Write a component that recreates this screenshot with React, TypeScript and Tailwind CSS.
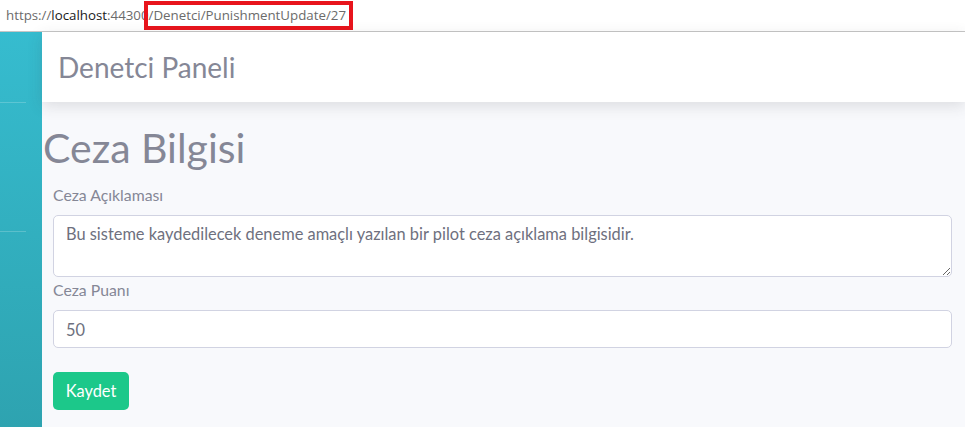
import React from "react"

const App: React.FC = () => {
  return (
    <div className="w-[965px] h-[427px] overflow-hidden bg-[#f8f9fc] flex flex-col font-['Lato',sans-serif]">
      {/* address bar */}
      <div className="h-[32px] bg-white border-b border-[#c6c6c6] flex items-center shrink-0 relative">
        <div className="pl-[6px] text-[13.3px] font-['Open_Sans',sans-serif] text-[#6b6b6b]">
          https://<span className="text-[#1a1a1a]">localhost</span>:44300/Denetci/PunishmentUpdate/27
        </div>
        {/* red highlight box drawn over the url */}
        <div className="absolute left-[144px] top-[1px] w-[209px] h-[29px] border-[4px] border-[#e8141c] pointer-events-none" />
      </div>

      <div className="flex flex-1 min-h-0">
        {/* sidebar */}
        <div className="w-[42px] shrink-0 bg-gradient-to-b from-[#36bccf] to-[#2ea3b0] flex flex-col">
          <div className="h-[70px]" />
          <div className="h-px w-[26px] bg-white/20" />
          <div className="h-[128px]" />
          <div className="h-px w-[26px] bg-white/20" />
        </div>

        {/* main */}
        <div className="flex-1 flex flex-col">
          <div className="h-[70px] bg-white shadow-[0_4px_14px_rgba(58,59,69,0.15)] flex items-center pl-[16px] relative z-10">
            <span className="text-[28px] text-[#858796]">Denetci Paneli</span>
          </div>

          <div className="pt-[22px] pl-px">
            <h1 className="text-[41px] leading-[48px] text-[#858796]">Ceza Bilgisi</h1>
            <div className="px-[10px] pr-[13px] mt-[11px]">
              <label className="block text-[15.8px] leading-[24px] text-[#858796] mb-[8px]">Ceza Açıklaması</label>
              <textarea
                className="block w-full h-[62px] rounded-[5px] border border-[#d1d3e2] bg-white px-[12px] py-[6px] text-[16.4px] leading-[24px] text-[#6e707e] outline-none"
                defaultValue="Bu sisteme kaydedilecek deneme amaçlı yazılan bir pilot ceza açıklama bilgisidir."
              />
              <label className="block text-[15.8px] leading-[24px] text-[#858796] mt-[1px] mb-[8px]">Ceza Puanı</label>
              <input
                type="text"
                className="block w-full h-[38px] rounded-[5px] border border-[#d1d3e2] bg-white px-[12px] text-[16.4px] text-[#6e707e] outline-none"
                defaultValue="50"
              />
              <button className="mt-[24px] h-[38px] w-[76px] rounded-[5px] bg-[#1cc88a] text-white text-[16.4px]">
                Kaydet
              </button>
            </div>
          </div>
        </div>
      </div>
    </div>
  )
}

export default App
